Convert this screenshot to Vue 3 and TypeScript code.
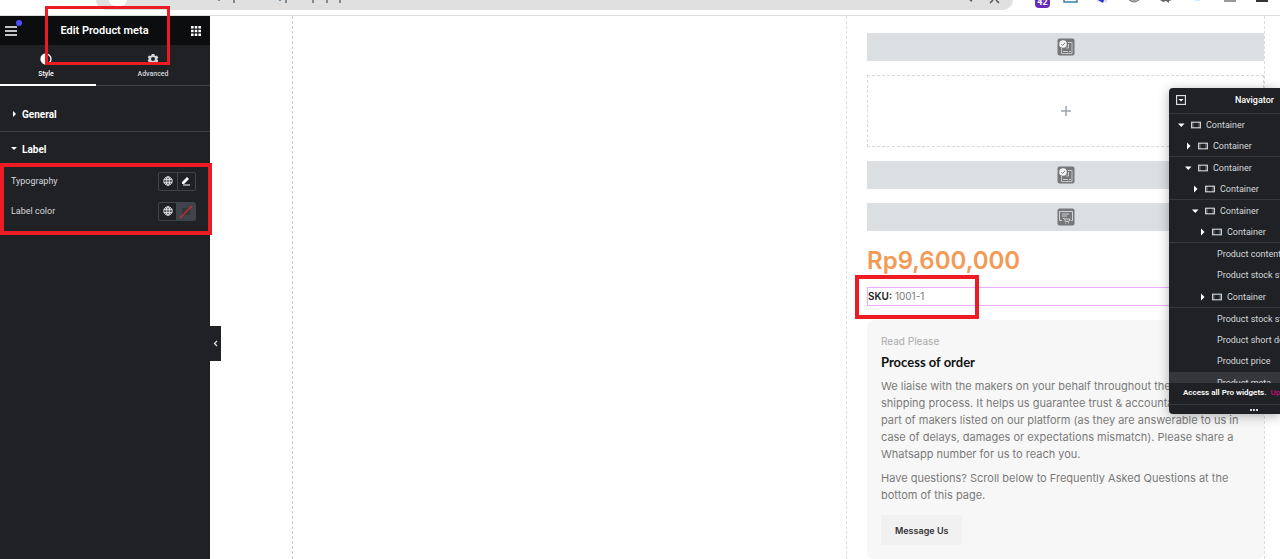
<script setup lang="ts">
interface TreeRow {
  label: string
  level: number
  kind: 'open' | 'closed' | 'leaf'
  line?: 'solid' | 'clear'
  selected?: boolean
}

const rows: TreeRow[] = [
  { label: 'Container', level: 0, kind: 'open' },
  { label: 'Container', level: 1, kind: 'closed', line: 'solid' },
  { label: 'Container', level: 1, kind: 'open' },
  { label: 'Container', level: 2, kind: 'closed', line: 'solid' },
  { label: 'Container', level: 2, kind: 'open' },
  { label: 'Container', level: 3, kind: 'closed', line: 'solid' },
  { label: 'Product content', level: 3, kind: 'leaf' },
  { label: 'Product stock status', level: 3, kind: 'leaf', line: 'clear' },
  { label: 'Container', level: 3, kind: 'closed', line: 'solid' },
  { label: 'Product stock status', level: 3, kind: 'leaf' },
  { label: 'Product short description', level: 3, kind: 'leaf' },
  { label: 'Product price', level: 3, kind: 'leaf', line: 'clear' },
  { label: 'Product meta', level: 3, kind: 'leaf', selected: true },
]

const about: string[] = [
  'We liaise with the makers on your behalf throughout the',
  'shipping process. It helps us guarantee trust & accountability',
  'part of makers listed on our platform (as they are answerable to us in',
  'case of delays, damages or expectations mismatch). Please share a',
  'Whatsapp number for us to reach you.',
]
const questions: string[] = [
  'Have questions? Scroll below to Frequently Asked Questions at the',
  'bottom of this page.',
]
</script>

<template>
  <div class="screen">
    <header class="browser">
      <div class="omnibox">
        <span class="site"></span>
        <svg class="url" width="124" height="4" viewBox="0 0 124 4" aria-hidden="true">
          <path d="M2 0v1M17 0v3M63 0v1M69 0v3M96 0v3M110 0v3M123 0v3" stroke="#7f8b95" stroke-width="2" />
        </svg>
        <svg class="tools" width="34" height="4" viewBox="0 0 34 4" aria-hidden="true">
          <path d="M3 0l2 1M23 3l3-3M29 0l3 3" stroke="#555" stroke-width="1.5" fill="none" />
        </svg>
      </div>
      <div class="extensions">
        <span class="count">42</span>
        <svg width="212" height="5" viewBox="0 0 212 5" aria-hidden="true">
          <path d="M1 0v2h13V0" fill="#fff" stroke="#3d7cab" stroke-width="1.5" />
          <path d="M34 0h10v2H34z" fill="#dcdcf0" /><path d="M35 0h6l-1 3z" fill="#2d35c8" />
          <path d="M66 0q5 4 10 0" fill="#aaa" stroke="#777" />
          <path d="M97 0h12l-3 1v2l-3-2-3 1z" fill="#666" />
          <path d="M132 0h5v1h-5z" fill="#cdeaff" />
          <path d="M161 0h12v2h-12z" fill="#999" />
          <path d="M193 0h12v2h-12z" fill="#333" />
        </svg>
      </div>
    </header>

    <div class="workspace">
      <aside class="panel">
        <div class="panel-head">
          <button class="icon-btn menu" aria-label="Menu">
            <svg width="13" height="10" viewBox="0 0 13 10"><path d="M0 1h12M0 5h12M0 9h12" stroke="#fff" stroke-width="1.6" /></svg>
            <span class="dot"></span>
          </button>
          <h1>Edit Product meta</h1>
          <button class="icon-btn" aria-label="Widgets">
            <svg width="10" height="10" viewBox="0 0 10 10" fill="#fff">
              <path d="M0 0h2.6v2.6H0zM3.7 0h2.6v2.6H3.7zM7.4 0H10v2.6H7.4zM0 3.7h2.6v2.6H0zM3.7 3.7h2.6v2.6H3.7zM7.4 3.7H10v2.6H7.4zM0 7.4h2.6V10H0zM3.7 7.4h2.6V10H3.7zM7.4 7.4H10V10H7.4z" />
            </svg>
          </button>
        </div>

        <div class="tabs" role="tablist">
          <button class="tab active" role="tab" aria-selected="true">
            <svg width="12" height="12" viewBox="0 0 12 12"><circle cx="6" cy="6" r="5" fill="none" stroke="#fff" stroke-width="1.3" /><path d="M6 1a5 5 0 0 0 0 10z" fill="#fff" /></svg>
            Style
          </button>
          <button class="tab" role="tab" aria-selected="false">
            <svg width="12" height="12" viewBox="0 0 12 12"><path fill="#d5d8dc" fill-rule="evenodd" d="M4.7 1h2.6l.4 1.4.9.5L10 2.500l1.300 2.200-1 1v1l1 1-1.300 2.200-1.400-.4-.9.5L7.300 11H4.700l-.4-1.400-.9-.5-1.400.4L.7 7.300l1-1v-1l-1-1L2 2.500l1.400.4.9-.5zM6 4a2 2 0 1 0 0 4 2 2 0 0 0 0-4z" /></svg>
            Advanced
          </button>
        </div>

        <div class="sections">
          <button class="section general">
            <svg width="6" height="8" viewBox="0 0 6 8"><path d="M2 1l3 3-3 3z" fill="#fff" /></svg>General
          </button>
          <button class="section">
            <svg width="6" height="8" viewBox="0 0 6 8"><path d="M0 2h6L3 5z" fill="#fff" /></svg>Label
          </button>
          <div v-for="name in ['Typography', 'Label color']" :key="name" class="control">
            <span>{{ name }}</span>
            <div class="pair" role="group" :aria-label="name">
              <button :aria-label="name + ' globals'">
                <svg width="10" height="10" viewBox="0 0 10 10" fill="none" stroke="#e6e8ea"><circle cx="5" cy="5" r="4.200" /><ellipse cx="5" cy="5" rx="1.900" ry="4.200" /><path d="M1 3.500h8M1 6.500h8M5 1v8" stroke-width=".8" /></svg>
              </button>
              <button v-if="name === 'Typography'" aria-label="Edit typography">
                <svg width="10" height="10" viewBox="0 0 10 10"><path d="M1 8V6l5-5 2 2-5 5zM2 8.500h7v1H2z" fill="#fff" /></svg>
              </button>
              <button v-else class="swatch" aria-label="Choose color">
                <svg width="18" height="17" viewBox="0 0 18 17"><path d="M5 5h8v7H5z" fill="#343639" /><path d="M3 15L15 3" stroke="#d8282d" stroke-width="1.200" /></svg>
              </button>
            </div>
          </div>
        </div>
        <button class="collapse" aria-label="Hide panel">
          <svg width="5" height="7" viewBox="0 0 5 7"><path d="M4 1L1.500 3.500 4 6" fill="none" stroke="#dfe1e4" stroke-width="1.300" /></svg>
        </button>
      </aside>

      <main class="canvas">
        <div class="gallery"></div>
        <section class="product">
          <div class="placeholder">
            <svg width="18" height="18" viewBox="0 0 18 18"><rect x=".5" y=".5" width="17" height="17" rx="2" fill="#757779" /><path d="M11 4.500h4v11H4.500V10M6 13.500h5M12 13.500h2M9 10h2.500V6" fill="none" stroke="#c4c7c9" /><circle cx="6" cy="6" r="3.800" fill="#f2f3f4" /><path d="M4.200 6l1.300 1.300L8 5" fill="none" stroke="#757779" /></svg>
          </div>
          <button class="dropzone" aria-label="Add element">
            <svg width="10" height="10" viewBox="0 0 10 10"><path d="M5 0v10M0 5h10" stroke="#9da5ae" stroke-width="1.500" /></svg>
          </button>
          <div class="placeholder">
            <svg width="18" height="18" viewBox="0 0 18 18"><rect x=".5" y=".5" width="17" height="17" rx="2" fill="#757779" /><path d="M11 4.500h4v11H4.500V10M6 13.500h5M12 13.500h2M9 10h2.500V6" fill="none" stroke="#c4c7c9" /><circle cx="6" cy="6" r="3.800" fill="#f2f3f4" /><path d="M4.200 6l1.300 1.300L8 5" fill="none" stroke="#757779" /></svg>
          </div>
          <div class="placeholder">
            <svg width="18" height="18" viewBox="0 0 18 18"><rect x=".5" y=".5" width="17" height="17" rx="2" fill="#757779" /><path d="M5 12.500H2.500v-9h13v9H14M5 6h7M5 8h5M6 10.500h1.500l1 3h3.500l1-2.500H8" fill="none" stroke="#cfd2d4" /><path d="M8 14.500h1v1H8zM11 14.500h1v1h-1z" fill="#cfd2d4" /></svg>
          </div>
          <p class="price">Rp9,600,000</p>
          <p class="meta"><b>SKU:</b> 1001-1</p>
          <article class="card">
            <p class="eyebrow">Read Please</p>
            <h2>Process of order</h2>
            <p class="copy"><span v-for="line in about" :key="line">{{ line }}</span></p>
            <p class="copy"><span v-for="line in questions" :key="line">{{ line }}</span></p>
            <button class="message">Message Us</button>
          </article>
        </section>
      </main>
    </div>

    <aside class="navigator">
      <div class="nav-head">
        <button class="icon-btn" aria-label="Toggle all">
          <svg width="10" height="10" viewBox="0 0 10 10"><rect x=".6" y=".6" width="8.800" height="8.800" fill="none" stroke="#e6e8ea" stroke-width="1.100" /><path d="M2.500 4h5L5 6.500z" fill="#fff" /></svg>
        </button>
        <h2>Navigator</h2>
      </div>
      <ul class="tree">
        <li v-for="(row, i) in rows" :key="i" :class="['level-' + row.level, row.kind, row.line, { selected: row.selected }]">
          <template v-if="row.kind !== 'leaf'">
            <svg v-if="row.kind === 'open'" width="7" height="8" viewBox="0 0 7 8"><path d="M0 2.500h6.500L3.250 6z" fill="#fff" /></svg>
            <svg v-else width="7" height="8" viewBox="0 0 7 8"><path d="M2 .5L5.500 4 2 7.500z" fill="#fff" /></svg>
            <svg class="box" width="10" height="8" viewBox="0 0 10 8"><rect x=".6" y="1.200" width="8.800" height="5.600" fill="none" stroke="#d5d8dc" stroke-width="1.100" /><path d="M2 1v6M8 1v6" stroke="#d5d8dc" stroke-width=".5" /></svg>
          </template>
          <span>{{ row.label }}</span>
        </li>
      </ul>
      <p class="promo">Access all Pro widgets. <a href="#">Upgrade</a></p>
      <div class="grip"><i></i><i></i><i></i></div>
    </aside>

    <div class="mark mark-title"></div>
    <div class="mark mark-label"></div>
    <div class="mark mark-sku"></div>
  </div>
</template>

<style>
html, body { margin: 0; }
body { overflow: hidden; }
</style>

<style scoped>
* { box-sizing: border-box; }
h1, h2, p, ul { margin: 0; padding: 0; }
button { font: inherit; color: inherit; background: none; border: 0; padding: 0; margin: 0; }
svg { display: block; flex: none; }
.screen { position: relative; display: flex; flex-direction: column; min-height: 100vh; overflow: hidden; background: #fff; font-family: Roboto, "Liberation Sans", sans-serif; font-size: 9px; }

.browser { display: flex; align-items: flex-start; height: 16px; padding-left: 96px; border-bottom: 1px solid #ddd; overflow: hidden; }
.omnibox { display: flex; align-items: flex-start; flex: 1; height: 10px; background: #e0e0e0; border-radius: 0 0 14px 14px; }
.site { width: 18px; height: 6px; margin-left: 13px; background: #fff; border-radius: 0 0 9px 9px; }
.url { margin-left: 90px; }
.tools { margin-left: auto; margin-right: 12px; }
.extensions { display: flex; gap: 13px; width: 267px; padding-left: 22px; }
.count { height: 8px; width: 15px; border-radius: 0 0 4px 4px; background: #672bb8; color: #fff; font-size: 9px; font-weight: 700; line-height: 5px; text-align: center; }

.workspace { display: flex; flex: 1; }
.panel { position: relative; display: flex; flex-direction: column; width: 210px; flex: none; background: #1f2124; color: #d5d8dc; }
.panel-head { display: flex; align-items: center; justify-content: space-between; height: 29px; padding: 0 9px 0 5px; background: #0c0d0e; color: #fff; }
.panel-head h1 { font-size: 11px; line-height: 14px; font-weight: 600; }
.icon-btn { position: relative; display: block; }
.dot { position: absolute; left: 11px; top: -6px; width: 6px; height: 6px; border-radius: 50%; background: #524cff; }
.tabs { display: flex; height: 41px; border-bottom: 1px solid #3f444b; }
.tab { display: flex; flex-direction: column; align-items: center; flex: 1; gap: 4px; height: 41px; padding-top: 8px; font-size: 7px; line-height: 11px; font-weight: 500; }
.tab.active { flex: none; width: 96px; padding-right: 4px; color: #fff; border-bottom: 2px solid #fff; }
.sections { display: flex; flex-direction: column; padding-top: 11px; }
.section { display: flex; align-items: center; gap: 5px; height: 34px; padding-left: 11px; font-size: 10px; font-weight: 700; color: #fff; }
.section.general { height: 35px; border-bottom: 1px solid #3f444b; }
.control { display: flex; align-items: center; justify-content: space-between; height: 30px; padding: 0 14px 0 11px; font-size: 9px; color: #d5d8dc; }
.pair { display: flex; width: 38px; height: 19px; border: 1px solid #3f444b; border-radius: 2px; overflow: hidden; }
.pair button { display: flex; align-items: center; justify-content: center; flex: 1; }
.pair button + button { border-left: 1px solid #3f444b; }
.pair .swatch { background: #3f444b; }
.collapse { position: absolute; left: 100%; top: 310px; display: flex; align-items: center; justify-content: center; width: 11px; height: 35px; background: #1f2124; }

.canvas { display: flex; flex: 1; padding: 0 15px 0 82px; }
.gallery { flex: 1; border-left: 1px dashed #ccc; }
.product { display: flex; flex-direction: column; gap: 14px; width: 419px; padding: 17px 0 0 20px; border-left: 1px dashed #ddd; border-right: 1px dashed #ddd; font-family: Inter, "Open Sans", sans-serif; }
.placeholder { display: flex; align-items: center; justify-content: center; height: 28px; background: #dbdfe2; }
.dropzone { display: flex; align-items: center; justify-content: center; height: 72px; border: 1px dashed #d5d8dc; }
.price { height: 28px; color: #f39a57; font-size: 24px; line-height: 32px; font-weight: 600; }
.meta { height: 19px; border: 1px solid #f0abfc; color: #777; font-size: 10px; line-height: 17px; }
.meta b { color: #222; font-weight: 600; }
.card { display: flex; flex-direction: column; align-items: flex-start; padding: 14px; background: #f7f7f7; border-radius: 7px; color: #7a7a7a; }
.eyebrow { font-size: 10px; line-height: 14px; color: #aaa; }
.card h2 { margin: 5px 0 7px; font-family: Lato, sans-serif; font-size: 13px; line-height: 18px; font-weight: 700; color: #111; }
.copy { margin-bottom: 7px; font-size: 11px; line-height: 17px; white-space: nowrap; }
.copy span { display: block; }
.message { height: 30px; padding: 0 14px; margin-top: 4px; background: #f1f1f1; color: #333; font-size: 9px; font-weight: 600; }

.navigator { position: absolute; top: 88px; right: 0; width: 111px; overflow: hidden; background: #1f2124; border-radius: 4px 0 0 4px; box-shadow: 0 2px 12px rgba(0, 0, 0, 0.3); color: #d5d8dc; white-space: nowrap; }
.nav-head { display: flex; align-items: center; justify-content: space-between; height: 26px; padding: 0 6px 2px 7px; border-bottom: 1px solid #35383d; }
.nav-head h2 { font-size: 9px; font-weight: 500; color: #fff; }
.tree { height: 269px; overflow: hidden; list-style: none; }
.tree li { display: flex; align-items: center; height: 21px; padding-top: 1px; font-size: 9px; line-height: 20px; }
.tree li.solid { height: 22px; border-bottom: 1px solid #35383d; }
.tree li.clear { height: 22px; border-bottom: 1px solid transparent; }
.tree li.selected { background: #35373b; }
.tree .box { margin: 0 5px 0 6px; }
.level-0 { padding-left: 9px; }
.level-1 { padding-left: 16px; }
.level-2 { padding-left: 23px; }
.level-3 { padding-left: 30px; }
.level-3.leaf { padding-left: 48px; }
.promo { height: 22px; padding-left: 14px; border-bottom: 1px solid #35383d; font-size: 8px; line-height: 20px; font-weight: 600; color: #fff; }
.promo a { margin-left: 2px; color: #b3126f; text-decoration: none; }
.grip { display: flex; justify-content: center; gap: 1px; height: 9px; padding: 4px 0 0 59px; }
.grip i { width: 2px; height: 2px; background: #d5d8dc; }

.mark { position: absolute; border: 3px solid #ed1c24; pointer-events: none; }
.mark-title { left: 45px; top: 6px; width: 125px; height: 59px; }
.mark-label { left: 0; top: 163px; width: 212px; height: 72px; border-width: 4px; }
.mark-sku { right: 301px; top: 275px; width: 124px; height: 44px; border-width: 4px; }
</style>
